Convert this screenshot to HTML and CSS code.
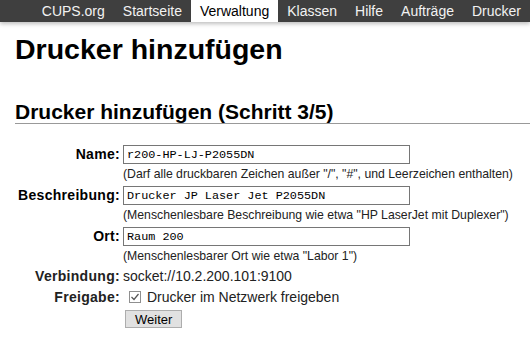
FILE: index.html
```html
<!DOCTYPE html>
<html lang="de">
<head>
  <meta charset="UTF-8" />
  <meta name="viewport" content="width=device-width, initial-scale=1.0"/>
  <title>Drucker hinzufügen - CUPS</title>
  <link rel="stylesheet" href="styles.css">
</head>
<body>
  <div class="header">
    <a href="#">CUPS.org</a>
    <a href="#">Startseite</a>
    <a href="#" class="active">Verwaltung</a>
    <a href="#">Klassen</a>
    <a href="#">Hilfe</a>
    <a href="#">Aufträge</a>
    <a href="#">Drucker</a>
  </div>

  <div class="body">
    <h1>Drucker hinzufügen</h1>
    <h2>Drucker hinzufügen (Schritt 3/5)</h2>

    <form class="form">
      <div class="row">
        <div class="label">Name:</div>
        <div class="value">
          <input type="text" class="field" value="r200-HP-LJ-P2055DN">
          <div class="hint">(Darf alle druckbaren Zeichen außer "/", "#", und Leerzeichen enthalten)</div>
        </div>
      </div>
      <div class="row">
        <div class="label">Beschreibung:</div>
        <div class="value">
          <input type="text" class="field" value="Drucker JP Laser Jet P2055DN">
          <div class="hint">(Menschenlesbare Beschreibung wie etwa "HP LaserJet mit Duplexer")</div>
        </div>
      </div>
      <div class="row">
        <div class="label">Ort:</div>
        <div class="value">
          <input type="text" class="field" value="Raum 200">
          <div class="hint">(Menschenlesbarer Ort wie etwa "Labor 1")</div>
        </div>
      </div>
      <div class="row row-text">
        <div class="label">Verbindung:</div>
        <div class="value">socket://10.2.200.101:9100</div>
      </div>
      <div class="row row-text row-check">
        <div class="label">Freigabe:</div>
        <div class="value">
          <span class="check">
            <svg width="12" height="12" viewBox="0 0 12 12">
              <rect x="0.5" y="0.5" width="11" height="11" fill="#fff" stroke="#8f8f8f"/>
              <path d="M2.5 6 L5 8.5 L9.5 3" fill="none" stroke="#555" stroke-width="1.2"/>
            </svg>
          </span>
          Drucker im Netzwerk freigeben
        </div>
      </div>
      <div class="row row-button">
        <div class="label"></div>
        <div class="value"><button type="button" class="btn">Weiter</button></div>
      </div>
    </form>
  </div>
</body>
</html>
```

FILE: styles.css
```css
body {
  margin: 0;
  font-family: "Liberation Sans", Arial, sans-serif;
  font-size: 14px;
  color: #000;
  background-color: #fff;
}

.header {
  display: flex;
  justify-content: flex-end;
  height: 22px;
  background-color: #3f3f3f;
  box-shadow: 0 2px 4px rgba(0, 0, 0, 0.25);
}

.header a {
  display: block;
  padding: 0 9px;
  line-height: 22px;
  font-size: 14px;
  color: #f2f2f2;
  text-decoration: none;
}

.header a.active {
  background-color: #fff;
  color: #000;
}

.body {
  padding: 0 0 0 15px;
}

h1 {
  margin: 11px 0 0;
  font-size: 28.5px;
  line-height: 32px;
  font-weight: bold;
}

h2 {
  margin: 36px 0 0;
  font-size: 21px;
  line-height: 22px;
  font-weight: bold;
  border-bottom: 1px solid #999;
}

.form {
  margin-top: 21px;
}

.row {
  display: flex;
  margin-bottom: 4px;
}

.label {
  width: 105px;
  margin-right: 3px;
  text-align: right;
  font-weight: bold;
  line-height: 19px;
  letter-spacing: 0.3px;
}

.field {
  display: block;
  box-sizing: border-box;
  width: 287px;
  height: 19px;
  margin: 0;
  padding: 0 3px;
  border: 1px solid #767676;
  font-family: "Liberation Mono", "Courier New", monospace;
  font-size: 11.8px;
  color: #000;
}

.hint {
  margin-top: 2px;
  font-size: 12.25px;
  line-height: 16px;
  color: #222;
}

.row-text .label,
.row-text .value {
  line-height: 16px;
}

.row-text {
  margin-top: 1px;
  margin-bottom: 5px;
  color: #222;
}

.row-check .value {
  display: flex;
  align-items: center;
}

.check {
  display: flex;
  margin: 0 6px 0 6px;
}

.row-button {
  margin-top: 2px;
}

.btn {
  margin: 0 0 0 2px;
  padding: 0 9px;
  height: 18px;
  font-family: "Liberation Sans", Arial, sans-serif;
  font-size: 13px;
  color: #000;
  background-color: #e1e1e1;
  border: 1px solid #adadad;
  border-radius: 0;
}
```
